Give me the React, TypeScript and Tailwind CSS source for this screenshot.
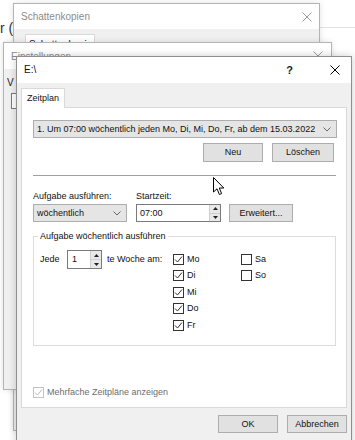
import type { ReactNode } from 'react';

const font = { fontFamily: '"Liberation Sans", Arial, sans-serif' };

function CloseIcon({ color = '#000' }: { color?: string }) {
  return (
    <svg width="10" height="10" viewBox="0 0 10 10">
      <path d="M0.5 0.5 L9.5 9.5 M9.5 0.5 L0.5 9.5" stroke={color} strokeWidth="1" />
    </svg>
  );
}

function Chevron() {
  return (
    <svg width="8" height="5" viewBox="0 0 8 5">
      <polyline points="0.5,0.5 4,4 7.5,0.5" fill="none" stroke="#666" strokeWidth="1" />
    </svg>
  );
}

function SpinArrows() {
  return (
    <div className="flex h-full w-[11px] flex-col border-l border-[#d0d0d0] bg-[#e8e8e8]">
      <div className="flex flex-1 items-center justify-center border-b border-[#d0d0d0]">
        <svg width="5" height="3" viewBox="0 0 5 3">
          <path d="M0 3 L2.5 0 L5 3 Z" fill="#222" />
        </svg>
      </div>
      <div className="flex flex-1 items-center justify-center">
        <svg width="5" height="3" viewBox="0 0 5 3">
          <path d="M0 0 L2.5 3 L5 0 Z" fill="#222" />
        </svg>
      </div>
    </div>
  );
}

function Button({ children, className = '' }: { children: ReactNode; className?: string }) {
  return (
    <div
      className={`flex items-center justify-center border border-[#adadad] bg-[#e1e1e1] text-[9px] leading-[11px] text-[#111] ${className}`}
    >
      {children}
    </div>
  );
}

function Combo({ children, className = '' }: { children: ReactNode; className?: string }) {
  return (
    <div
      className={`flex items-center justify-between border border-[#adadad] bg-[#e5e5e5] pl-[3px] pr-[5px] text-[9px] leading-[11px] text-[#111] ${className}`}
    >
      <span className="whitespace-nowrap">{children}</span>
      <Chevron />
    </div>
  );
}

function Check({ checked = true, disabled = false }: { checked?: boolean; disabled?: boolean }) {
  const c = disabled ? '#bcbcbc' : '#333';
  return (
    <div
      className={`flex h-[11px] w-[11px] items-center justify-center border bg-white ${disabled ? 'border-[#c4c4c4]' : 'border-[#333]'}`}
    >
      {checked && (
        <svg width="9" height="9" viewBox="0 0 9 9">
          <polyline points="1,4.5 3.5,7 8,1.5" fill="none" stroke={c} strokeWidth="1" />
        </svg>
      )}
    </div>
  );
}

function Day({ label, checked = true }: { label: string; checked?: boolean }) {
  return (
    <div className="flex h-[16.5px] items-center gap-[3px]">
      <Check checked={checked} />
      <span>{label}</span>
    </div>
  );
}

export default function App() {
  return (
    <div className="relative h-[440px] w-[355px] overflow-hidden bg-white text-[#111]" style={font}>
      {/* explorer behind */}
      <div className="absolute left-0 top-[20px] text-[14px] leading-[17px] text-[#333]">r (</div>
      <div className="absolute left-[319px] top-[27px] h-px w-[40px] bg-[#e3e3e3]" />

      {/* Schattenkopien */}
      <div className="absolute left-[13px] top-[3px] flex h-[428px] w-[307px] flex-col border border-[#b4b4b4] bg-[#f0f0f0] shadow-[0_0_6px_rgba(0,0,0,0.12)]">
        <div className="flex h-[25px] items-center justify-between bg-white pl-[7px] pr-[7px] text-[10px] text-[#8c8c8c]">
          <span>Schattenkopien</span>
          <CloseIcon color="#9a9a9a" />
        </div>
        <div className="pl-[11px] pt-[5px]">
          <div className="h-[20px] w-[70px] border border-b-0 border-[#d9d9d9] bg-white pl-[3px] pt-[4px] text-[10px] leading-[12px]">
            Schattenkopien
          </div>
        </div>
      </div>

      {/* Einstellungen */}
      <div className="absolute left-[3px] top-[42px] flex h-[348px] w-[329px] flex-col border border-[#b4b4b4] bg-[#f0f0f0] shadow-[0_0_6px_rgba(0,0,0,0.12)]">
        <div className="flex h-[26px] items-center justify-between bg-white pl-[7px] pr-[8px] text-[10px] text-[#8c8c8c]">
          <span>Einstellungen</span>
          <CloseIcon color="#9a9a9a" />
        </div>
        <div className="pl-[3px] pt-[8px] text-[10px] leading-[12px] text-[#222]">V</div>
        <div className="ml-[7px] mt-[4px] h-[16px] w-[12px] border border-[#7a7a7a] bg-white" />
      </div>

      {/* E:\ dialog */}
      <div className="absolute left-[16px] top-[56px] flex h-[400px] w-[336px] flex-col border border-[#8e8e8e] bg-[#f0f0f0] shadow-[0_0_8px_rgba(0,0,0,0.2)]">
        <div className="flex h-[26px] items-center bg-white pl-[7px] text-[10px] leading-[12px]">
          <span className="flex-1">E:\</span>
          <span className="mr-[37px] text-[11px] font-bold text-[#222]">?</span>
          <span className="mr-[11px]">
            <CloseIcon />
          </span>
        </div>

        <div className="flex flex-col px-[4px] pt-[5px] text-[9px] leading-[11px]">
          <div className="relative z-10 mb-[-1px] flex h-[20px] w-[44px] items-center border border-b-0 border-[#d9d9d9] bg-white pl-[5px]">
            Zeitplan
          </div>
          <div className="flex h-[301px] w-[326px] flex-col border border-[#d9d9d9] bg-white pb-[9px] pl-[11px] pt-[12px]">
            <Combo className="h-[18px] w-[304px]">
              1. Um 07:00 wöchentlich jeden Mo, Di, Mi, Do, Fr, ab dem 15.03.2022
            </Combo>
            <div className="mt-[5px] flex w-[304px] justify-end gap-[9px] pr-[3px]">
              <Button className="h-[19px] w-[60px]">Neu</Button>
              <Button className="h-[19px] w-[62px]">Löschen</Button>
            </div>
            <div className="mt-[13px] h-px w-[303px] bg-[#a0a0a0]" />

            <div className="mt-[15px] flex">
              <span className="w-[103px]">Aufgabe ausführen:</span>
              <span>Startzeit:</span>
            </div>
            <div className="mt-[2px] flex items-start">
              <Combo className="h-[18px] w-[94px]">wöchentlich</Combo>
              <div className="ml-[9px] flex h-[18px] w-[85px] items-center justify-between border border-[#7a7a7a] bg-white pl-[3px]">
                <span>07:00</span>
                <SpinArrows />
              </div>
              <Button className="ml-[8px] h-[18px] w-[64px]">Erweitert...</Button>
            </div>

            <fieldset className="mt-[9px] h-[115px] w-[303px] border border-[#dcdcdc]">
              <legend className="ml-[4px] px-[2px]">Aufgabe wöchentlich ausführen</legend>
              <div className="mt-[8px] flex items-start pl-[6px]">
                <div className="flex h-[19px] items-center">
                  <span className="w-[27px]">Jede</span>
                  <div className="flex h-[19px] w-[35px] items-center justify-between border border-[#7a7a7a] bg-white pl-[4px]">
                    <span>1</span>
                    <SpinArrows />
                  </div>
                  <span className="ml-[5px] w-[66px]">te Woche am:</span>
                </div>
                <div className="mt-[1px] flex w-[68px] flex-col">
                  <Day label="Mo" />
                  <Day label="Di" />
                  <Day label="Mi" />
                  <Day label="Do" />
                  <Day label="Fr" />
                </div>
                <div className="mt-[1px] flex flex-col">
                  <Day label="Sa" checked={false} />
                  <Day label="So" checked={false} />
                </div>
              </div>
            </fieldset>

            <div className="mt-auto flex items-center gap-[3px] text-[#6d6d6d]">
              <Check disabled />
              <span>Mehrfache Zeitpläne anzeigen</span>
            </div>
          </div>

          <div className="mt-[7px] flex justify-end gap-[9px]">
            <Button className="h-[18px] w-[60px] border-[#0078d7]">OK</Button>
            <Button className="h-[18px] w-[60px]">Abbrechen</Button>
          </div>
        </div>
      </div>

      {/* mouse pointer */}
      <svg className="absolute left-[213px] top-[177px]" width="12" height="19" viewBox="0 0 12 19">
        <path
          d="M0.5 0.5 L0.5 15 L4 11.8 L6.4 17.5 L8.6 16.6 L6.3 11 L10.8 11 Z"
          fill="#fff"
          stroke="#000"
          strokeWidth="1"
          strokeLinejoin="round"
        />
      </svg>
    </div>
  );
}
